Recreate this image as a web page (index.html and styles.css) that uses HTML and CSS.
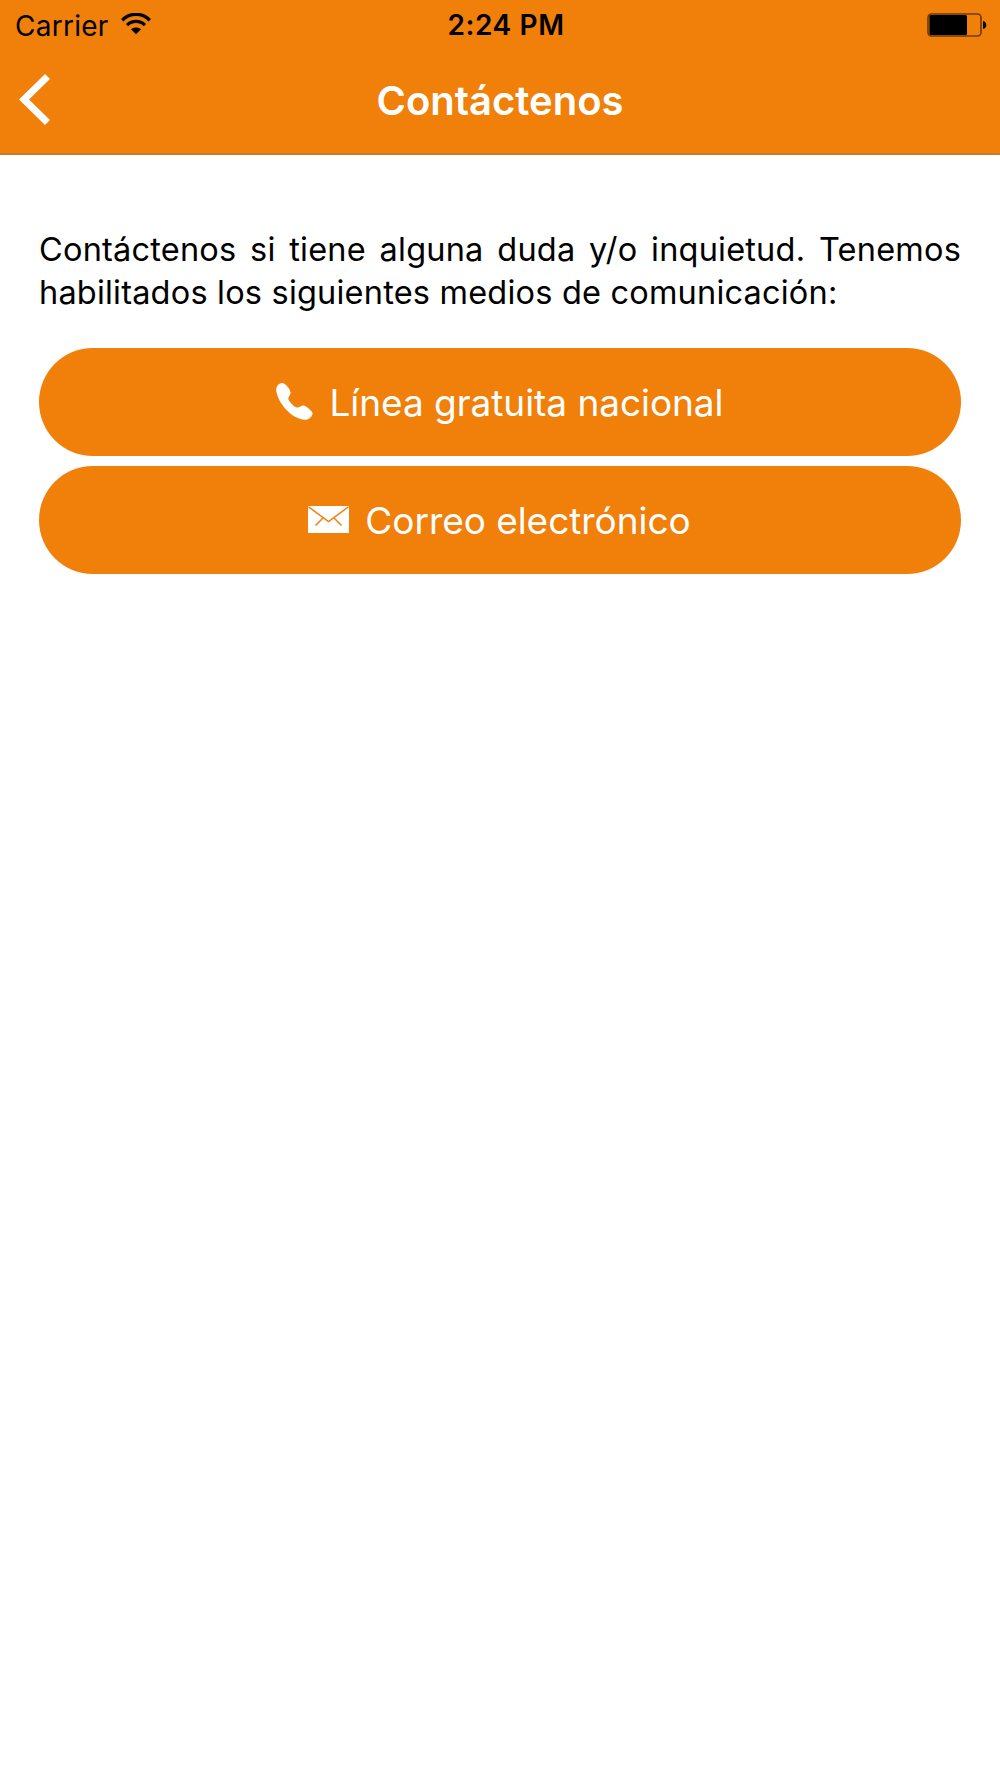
FILE: index.html
```html
<!DOCTYPE html>
<html lang="es">
<head>
    <meta charset="UTF-8">
    <meta name="viewport" content="width=device-width, initial-scale=1.0">
    <title>Contáctenos</title>
    <link rel="stylesheet" href="styles.css">
</head>
<body>

<header class="header">
    <div class="status-bar">
        <div class="carrier">
            <span class="carrier-name">Carrier</span>
            <svg class="wifi" viewBox="0 0 30 22">
                <path d="M1.2 7.2C9.2 -0.6 20.8 -0.6 28.8 7.2" fill="none" stroke="#000" stroke-width="3.4"/>
                <path d="M6 12.2C11.2 7.2 18.8 7.2 24 12.2" fill="none" stroke="#000" stroke-width="3.2"/>
                <path d="M10 16.3C13 13.8 17 13.8 20 16.3L15 21.3z"/>
            </svg>
        </div>
        <span class="time">2:24 PM</span>
        <svg class="battery" viewBox="0 0 60 24">
            <rect x="1" y="1" width="53" height="22" rx="3.5" fill="none" stroke="#6b3a06" stroke-width="1.6"/>
            <rect x="2.4" y="2" width="37.6" height="20" rx="1.5"/>
            <path d="M56 8C60.4 8.5 60.4 15.5 56 16z"/>
        </svg>
    </div>
    <nav class="nav-bar">
        <a class="back" href="#" aria-label="Atrás">
            <svg class="chevron" viewBox="0 0 31 51">
                <path d="M28.5 2.5L5 25.5L28.5 48.5" fill="none" stroke="#fff" stroke-width="7"/>
            </svg>
        </a>
        <h1 class="title">Contáctenos</h1>
    </nav>
</header>

<main class="content">
    <p class="intro">Contáctenos si tiene alguna duda y/o inquietud. Tenemos habilitados los siguientes medios de comunicación:</p>
    <button class="btn">
        <svg class="phone" viewBox="0 0 37 37">
            <path d="M6 0C2 0.5 -0.5 4 0.4 9C3 21 15 35 28 36.8C32 37.2 36.2 34 36.6 30.4C36.7 28.5 30.5 23 28 22.5C25.5 22 23 25 21 24.6C17.5 23.5 13 18.5 12.3 16C12 14 14.5 12 14.6 9.5C14.6 7 9.5 -0.3 6 0z" fill="#fff"/>
        </svg>
        <span class="label">Línea gratuita nacional</span>
    </button>
    <button class="btn">
        <svg class="mail" viewBox="0 0 41 27">
            <rect width="41" height="27" fill="#fff"/>
            <path d="M0.5 0.8L20.5 15.5L40.5 0.8M15 12L7.5 19.5M26 12L33.5 19.5" fill="none" stroke="#f0800a" stroke-width="1.5"/>
        </svg>
        <span class="label">Correo electrónico</span>
    </button>
</main>

</body>
</html>
```
FILE: styles.css
```css
* {
    box-sizing: border-box;
}
body {
    margin: 0;
    background: #fff;
    color: #000;
    font-family: Inter, sans-serif;
}
.header {
    height: 155px;
    background: #f0800a;
    border-bottom: 2px solid #c77b2b;
}
.status-bar {
    display: grid;
    grid-template-columns: 1fr auto 1fr;
    align-items: center;
    height: 50px;
    padding: 0 13px 0 15px;
    font-size: 28px;
}
.carrier {
    display: flex;
    align-items: center;
    gap: 12px;
    letter-spacing: 0.25px;
}
.carrier-name {
    padding-top: 1px;
}
.wifi {
    width: 30px;
    height: 22px;
    margin-bottom: 2px;
}
.time {
    padding-left: 10px;
    font-weight: 600;
    letter-spacing: 0.6px;
}
.battery {
    justify-self: end;
    width: 60px;
    height: 24px;
}
.nav-bar {
    display: grid;
    grid-template-columns: 1fr auto 1fr;
    align-items: center;
    height: 100px;
    padding: 0 19px;
}
.chevron {
    display: block;
    width: 31px;
    height: 51px;
    margin-bottom: 2px;
}
.title {
    margin: 0;
    color: #fff;
    font-size: 40px;
    font-weight: 600;
}
.content {
    display: flex;
    flex-direction: column;
    gap: 9.5px;
    padding: 73px 39px 0;
}
.intro {
    margin: 0 0 24.5px;
    font-size: 32.5px;
    line-height: 43px;
    letter-spacing: 0.2px;
    text-align: justify;
}
.btn {
    display: flex;
    align-items: center;
    justify-content: center;
    gap: 16px;
    height: 108px;
    padding: 0;
    border: none;
    border-radius: 55px;
    background: #f0800a;
    color: #fff;
    font-family: inherit;
    font-size: 37px;
}
.label {
    padding-top: 1px;
    letter-spacing: -0.05px;
}
.phone {
    width: 37px;
    height: 37px;
    margin-bottom: 1px;
}
.mail {
    width: 41px;
    height: 27px;
    margin-left: -1px;
}
```
